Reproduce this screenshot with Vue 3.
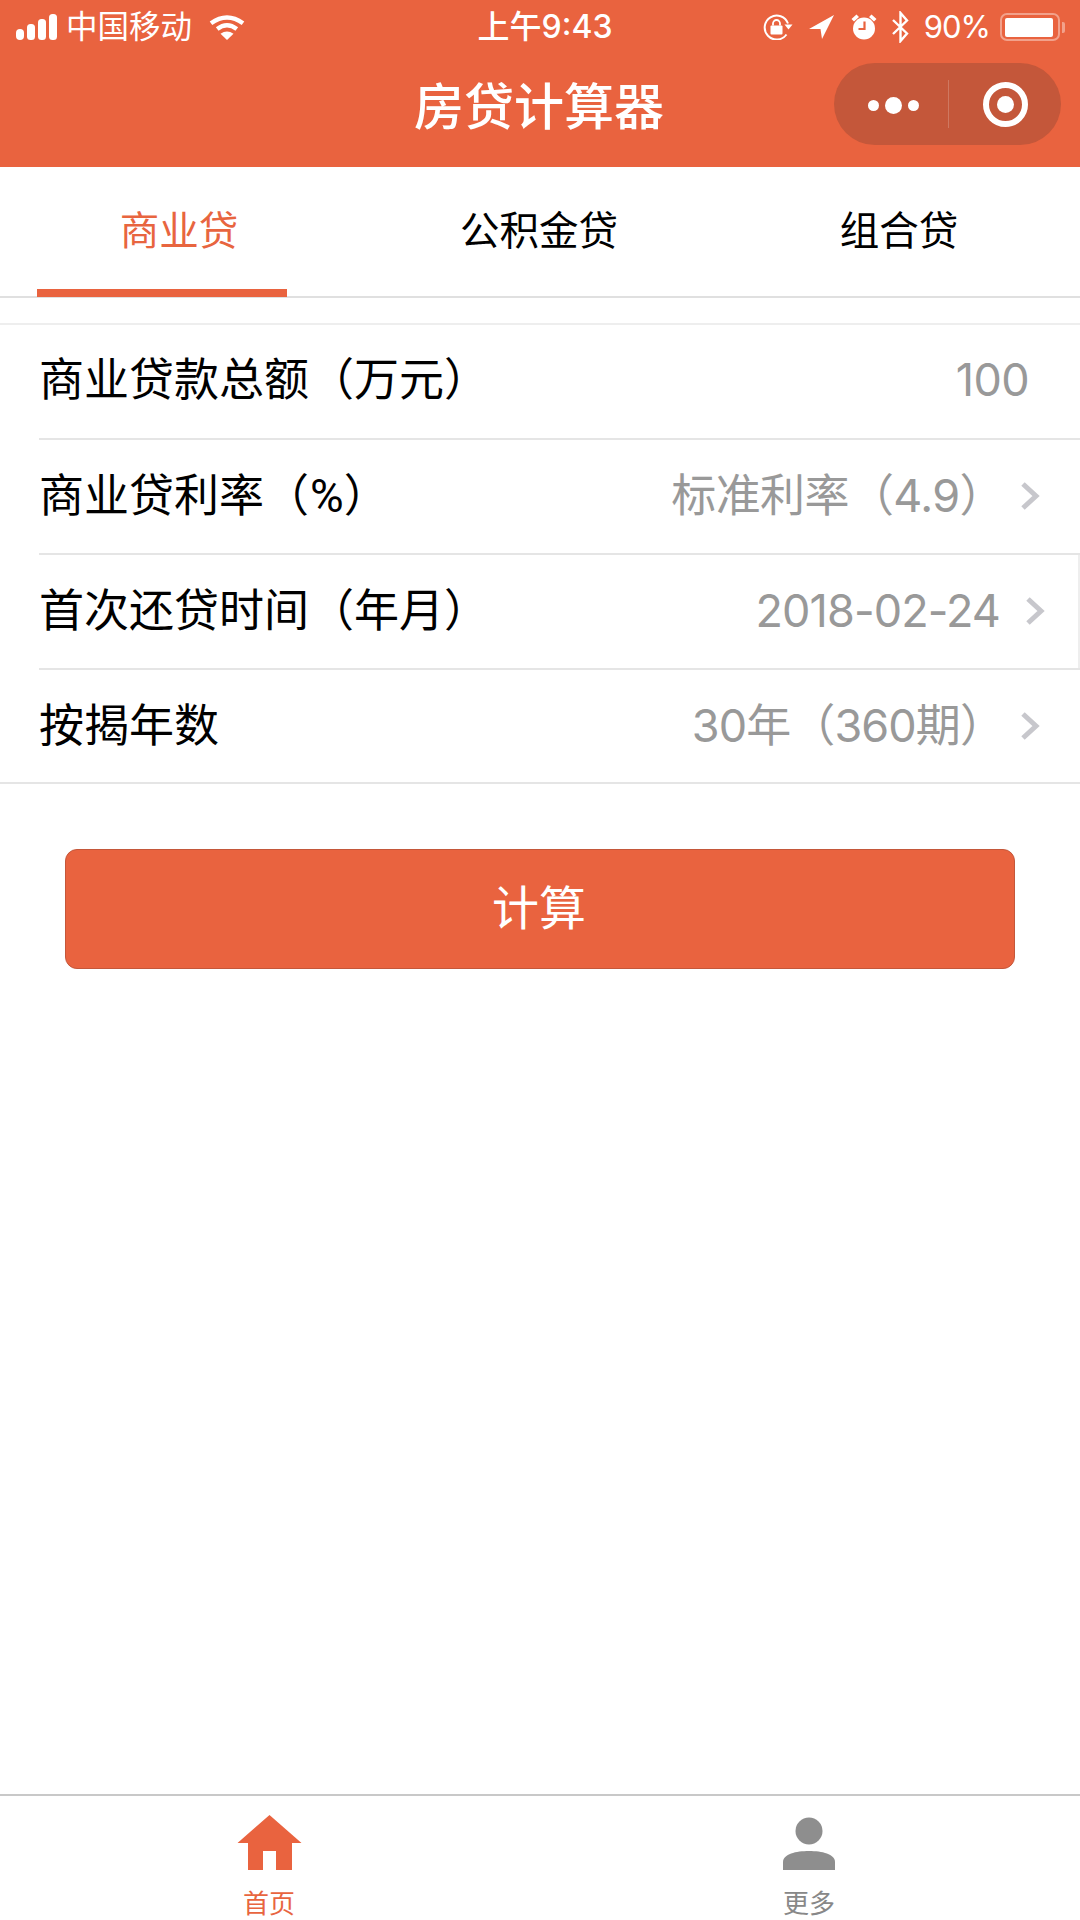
<script setup>
const tabs = [
  { label: '商业贷', active: true },
  { label: '公积金贷', active: false },
  { label: '组合贷', active: false },
]
const rows = [
  { label: '商业贷款总额（万元）', value: '100', arrow: false, cls: 'first' },
  { label: '商业贷利率（', sign: '%', tail: '）', value: '标准利率（4.9）', arrow: true, cls: 'second' },
  { label: '首次还贷时间（年月）', value: '2018-02-24', arrow: true, cls: 'third' },
  { label: '按揭年数', value: '30年（360期）', arrow: true, cls: 'fourth' },
]
</script>

<template>
  <div class="page">
    <header class="head">
      <div class="status">
        <div class="st-left">
          <svg class="signal" width="42" height="26" viewBox="0 0 42 26">
            <rect x="0" y="15" width="8" height="11" rx="4" fill="#fff" />
            <rect x="11" y="10" width="8" height="16" rx="3.5" fill="#fff" />
            <rect x="22" y="5" width="8" height="21" rx="3.5" fill="#fff" />
            <rect x="33" y="0" width="8" height="26" rx="3.5" fill="#fff" />
          </svg>
          <span class="carrier">中国移动</span>
          <svg class="wifi" width="36" height="25" viewBox="0 0 36 25">
            <path d="M18 25 L11.5 18.8 Q18 14.2 24.5 18.8 Z" fill="#fff" />
            <path d="M8.2 14 Q18 6.5 27.8 14" fill="none" stroke="#fff" stroke-width="4.4" />
            <path d="M2 8.2 Q18 -3.4 34 8.2" fill="none" stroke="#fff" stroke-width="4.4" />
          </svg>
        </div>
        <div class="st-time">上午9:43</div>
        <div class="st-right">
          <svg width="30" height="26" viewBox="0 0 30 26">
            <path d="M23.5 20.5 A12 12 0 1 1 25 9.5" fill="none" stroke="#fff" stroke-width="2" />
            <path d="M21.5 10.5 L29.5 10.5 L25.5 15.5 Z" fill="#fff" />
            <rect x="7.5" y="11.5" width="12" height="9" rx="1" fill="#fff" />
            <path d="M10 11.5 V9.5 A3.5 3.5 0 0 1 17 9.5 V11.5" fill="none" stroke="#fff" stroke-width="1.8" />
          </svg>
          <svg class="loc" width="25" height="24" viewBox="0 0 25 24">
            <path d="M25 0 L0 14 L11.5 14 L13 24 Z" fill="#fff" />
          </svg>
          <svg class="alarm" width="26" height="26" viewBox="0 0 26 26">
            <circle cx="13" cy="14.5" r="11" fill="#fff" />
            <path d="M0.5 5 L5.5 0.5 L8 3 L3 7.5 Z M25.5 5 L20.5 0.5 L18 3 L23 7.5 Z" fill="#fff" />
            <path d="M13.5 7.5 V15 H7.5" fill="none" stroke="#e9633f" stroke-width="2.2" />
          </svg>
          <svg class="bt" width="19" height="32" viewBox="0 0 19 32">
            <path d="M2 9 L16 22.5 L9.5 30 V2 L16 9.5 L2 23" fill="none" stroke="#fff" stroke-width="2.4" />
          </svg>
          <span class="pct">90%</span>
          <div class="battery">
            <div class="battery-fill"></div>
          </div>
          <div class="battery-tip"></div>
        </div>
      </div>
      <div class="nav">
        <div class="title">房贷计算器</div>
        <div class="capsule">
          <div class="dots">
            <i></i><i class="big"></i><i></i>
          </div>
          <div class="sep"></div>
          <div class="target"><i></i></div>
        </div>
      </div>
    </header>

    <nav class="tabs">
      <div v-for="t in tabs" :key="t.label" class="tab" :class="{ active: t.active }">{{ t.label }}</div>
    </nav>

    <section class="form">
      <div v-for="r in rows" :key="r.label" class="row" :class="r.cls">
        <span class="label">{{ r.label }}<span v-if="r.sign" class="sign">{{ r.sign }}</span>{{ r.tail }}</span>
        <span class="value">{{ r.value }}</span>
        <svg v-if="r.arrow" class="arrow" width="20" height="30" viewBox="0 0 20 30">
          <path d="M3 3 L16 15 L3 27" fill="none" stroke="#c7c7cc" stroke-width="5" />
        </svg>
      </div>
    </section>

    <div class="btn-wrap">
      <div class="btn">计算</div>
    </div>

    <footer class="tabbar">
      <div class="bar-item on">
        <svg class="home" width="65" height="56" viewBox="0 0 65 56">
          <path d="M32.5 0 L64.5 28 L55 28 L55 55 L39 55 L39 36 L26 36 L26 55 L11 55 L11 28 L0.5 28 Z" fill="#e9633f" />
        </svg>
        <span>首页</span>
      </div>
      <div class="bar-item">
        <svg width="54" height="56" viewBox="0 0 54 56">
          <ellipse cx="27" cy="16" rx="13.5" ry="13.5" fill="#8e8e8e" />
          <path d="M1 55 V47 C1 39 14 36 27 36 C40 36 53 39 53 47 V55 Z" fill="#8e8e8e" />
        </svg>
        <span>更多</span>
      </div>
    </footer>
  </div>
</template>

<style scoped>
.page {
  width: 1080px;
  height: 1920px;
  display: flex;
  flex-direction: column;
  background: #fff;
  overflow: hidden;
  font-family: Inter, "Noto Sans CJK SC", sans-serif;
  color: #000;
}
.head {
  height: 167px;
  background: #e9633f;
  color: #fff;
  display: flex;
  flex-direction: column;
}
.status {
  height: 54px;
  display: grid;
  grid-template-columns: 1fr auto 1fr;
  align-items: center;
}
.st-left {
  display: flex;
  align-items: center;
  padding-left: 16px;
}
.carrier {
  font-size: 31.5px;
  line-height: 40px;
  margin-left: 8px;
}
.wifi {
  margin-left: 17px;
}
.st-time {
  font-size: 32px;
  line-height: 40px;
  font-weight: 500;
  padding-left: 10px;
}
.st-right {
  display: flex;
  align-items: center;
  justify-content: flex-end;
  padding-right: 15px;
}
.loc {
  margin-left: 16px;
}
.alarm {
  margin-left: 17px;
}
.bt {
  margin-left: 14px;
}
.pct {
  font-size: 31px;
  line-height: 40px;
  letter-spacing: -1px;
  margin-left: 14px;
}
.battery {
  width: 60px;
  height: 28px;
  box-sizing: border-box;
  border: 2px solid rgba(255, 255, 255, 0.4);
  border-radius: 7px;
  padding: 2.5px 3px;
  margin-left: 10px;
}
.battery-fill {
  width: 48px;
  height: 19px;
  background: #fff;
  border-radius: 2px;
}
.battery-tip {
  width: 3px;
  height: 11px;
  margin-left: 2px;
  background: rgba(255, 255, 255, 0.4);
  border-radius: 0 2px 2px 0;
}
.nav {
  flex: 1;
  position: relative;
  display: flex;
  align-items: center;
  justify-content: center;
}
.title {
  font-size: 50px;
  line-height: 60px;
  font-weight: 500;
  margin-top: -8px;
  margin-left: -2px;
}
.capsule {
  position: absolute;
  left: 834px;
  top: 9px;
  width: 227px;
  height: 82px;
  border-radius: 41px;
  background: #c4573a;
  display: flex;
  align-items: center;
}
.dots {
  width: 114px;
  display: flex;
  align-items: center;
  justify-content: center;
  gap: 6px;
  padding-top: 2px;
  padding-left: 4px;
  box-sizing: border-box;
}
.dots i {
  width: 11px;
  height: 11px;
  border-radius: 50%;
  background: #fff;
}
.dots i.big {
  width: 17px;
  height: 17px;
}
.sep {
  width: 1px;
  height: 48px;
  background: rgba(255, 255, 255, 0.2);
}
.target {
  flex: 1;
  display: flex;
  align-items: center;
  justify-content: center;
  padding-top: 1px;
}
.target i {
  width: 45px;
  height: 45px;
  box-sizing: border-box;
  border: 6px solid #fff;
  border-radius: 50%;
  position: relative;
  display: block;
}
.target i::after {
  content: "";
  position: absolute;
  left: 8px;
  top: 8px;
  width: 17px;
  height: 17px;
  border-radius: 50%;
  background: #fff;
}
.tabs {
  height: 131px;
  box-sizing: border-box;
  border-bottom: 2px solid #e0e0e0;
  display: grid;
  grid-template-columns: repeat(3, 360px);
}
.tab {
  font-size: 39.5px;
  line-height: 50px;
  text-align: center;
  padding-top: 39px;
  padding-right: 2px;
  position: relative;
}
.tab.active {
  color: #e8653f;
}
.tab.active::after {
  content: "";
  position: absolute;
  left: 37px;
  bottom: -1px;
  width: 250px;
  height: 8px;
  background: #e9633f;
}
.form {
  margin-top: 25px;
  border-top: 2px solid #eeeeee;
  border-bottom: 2px solid #e5e5e5;
}
.row {
  height: 114.75px;
  box-sizing: border-box;
  display: flex;
  align-items: center;
  margin-left: 39px;
  padding-right: 40px;
  font-size: 45px;
  position: relative;
}
.row + .row {
  border-top: 2px solid #e5e5e5;
}
.first {
  height: 113px;
  padding-right: 51px;
  padding-bottom: 4px;
}
.third::after {
  content: "";
  position: absolute;
  right: 0;
  top: 0;
  bottom: 0;
  width: 2px;
  background: #eeeeee;
}
.label {
  flex: 1;
  line-height: 60px;
  white-space: nowrap;
}
.sign {
  font-family: Roboto, sans-serif;
  font-size: 46px;
  margin-left: 1px;
}
.value {
  color: #999;
  line-height: 60px;
  white-space: nowrap;
  letter-spacing: -0.6px;
}
.third .value,
.fourth .value {
  letter-spacing: -0.9px;
}
.arrow {
  margin-left: 16px;
}
.third .arrow {
  margin-left: 25px;
  margin-right: -5px;
}
.btn-wrap {
  padding: 65px 65px 0;
}
.btn {
  height: 120px;
  box-sizing: border-box;
  border: 1px solid #c4573a;
  border-radius: 12px;
  background: #e9633f;
  color: #fff;
  font-size: 47px;
  line-height: 116px;
  text-align: center;
  padding-right: 2px;
}
.tabbar {
  margin-top: auto;
  height: 126px;
  box-sizing: border-box;
  border-top: 2px solid #c8c8c8;
  display: grid;
  grid-template-columns: 540px 540px;
}
.bar-item {
  display: flex;
  flex-direction: column;
  align-items: center;
  padding-top: 19px;
  padding-right: 2px;
  font-size: 26px;
  line-height: 32px;
  color: #888;
}
.bar-item svg {
  display: block;
  margin-bottom: 17px;
}
.bar-item.on {
  color: #e8653f;
}
</style>
